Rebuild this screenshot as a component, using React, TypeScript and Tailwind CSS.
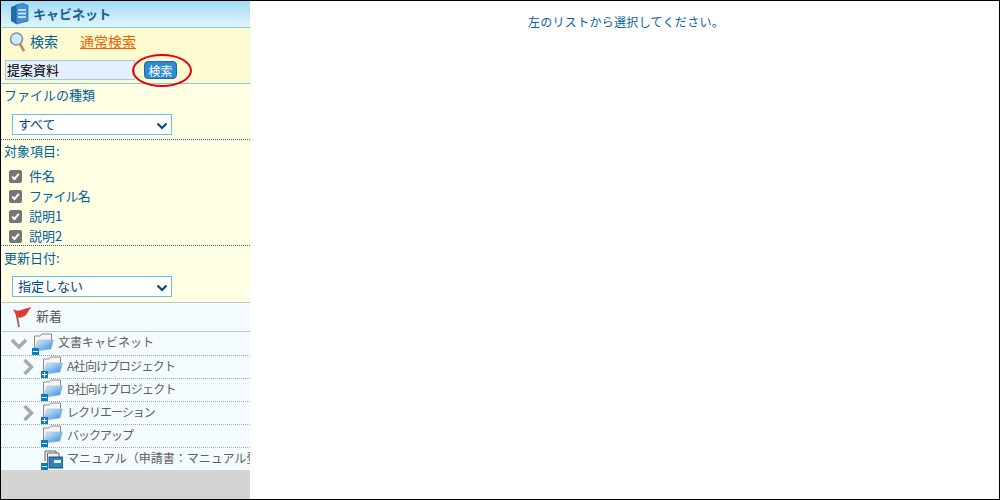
import React from 'react';

const FONT = { fontFamily: '"Noto Sans CJK JP", "Liberation Sans", sans-serif' };

const Arrow = () => (
  <svg width="12" height="8" viewBox="0 0 12 8" className="absolute right-[3px] top-[7px]">
    <path d="M1.5 1.5 L6 6 L10.5 1.5" fill="none" stroke="#004a80" strokeWidth="2.2" />
  </svg>
);

const FakeSelect = ({ label }: { label: string }) => (
  <div className="relative w-[160px] h-[21px] ml-[11px] bg-white border border-[#66c0f0] pl-[5px] text-[13px] leading-[18px] text-[#004a80]">
    {label}
    <Arrow />
  </div>
);

const Check = ({ label, tight }: { label: string; tight?: boolean }) => (
  <div className="flex items-center h-5 pl-[8px]">
    <span className="flex items-center justify-center w-[13px] h-[13px] rounded-[2px] bg-[#767676]">
      <svg width="9" height="9" viewBox="0 0 9 9">
        <path d="M1.2 4.6 L3.5 7 L7.8 1.8" fill="none" stroke="#fff" strokeWidth="2" />
      </svg>
    </span>
    <span className={tight ? 'ml-[7px] text-[13px] leading-5 text-[#00609c] tracking-[-0.8px]' : 'ml-[7px] text-[13px] leading-5 text-[#00609c]'}>
      {label}
    </span>
  </div>
);

const Badge = ({ open }: { open: boolean }) => (
  <span className="absolute left-0 bottom-0 w-[7px] h-[7px] bg-[#0a7cc4] flex items-center justify-center">
    <svg width="7" height="7" viewBox="0 0 7 7">
      <path d={open ? 'M1 3.5H6' : 'M1 3.5H6M3.5 1V6'} stroke="#fff" strokeWidth="1" />
    </svg>
  </span>
);

const Folder = ({ open }: { open: boolean }) => (
  <span className="relative block w-[22px] h-[22px] shrink-0">
    <svg width="22" height="22" viewBox="0 0 22 22" className="absolute inset-0">
      <defs>
        <linearGradient id="fld" x1="0" y1="0" x2="1" y2="1">
          <stop offset="0" stopColor="#e4f4fe" />
          <stop offset="1" stopColor="#2585dc" />
        </linearGradient>
      </defs>
      <path d="M2.5 15 V3 H8 L10 1 H19.5 V7" fill="#f6f6f6" stroke="#8a8a8a" strokeWidth="1" />
      <path d="M2 18.5 L6 7 H21.5 L19 16 Z" fill="url(#fld)" stroke="#a8b8c4" strokeWidth="0.6" />
    </svg>
    <Badge open={open} />
  </span>
);

const LinkedCabinet = () => (
  <span className="relative block w-[22px] h-[22px] shrink-0">
    <svg width="22" height="22" viewBox="0 0 22 22" className="absolute inset-0">
      <path d="M4 13 V3 H15 V7" fill="#eee" stroke="#667" strokeWidth="1" />
      <path d="M6.5 15 V5 H18 V9" fill="#eee" stroke="#667" strokeWidth="1" />
      <rect x="8" y="9" width="14" height="11" fill="#2b86c0" stroke="#234" strokeWidth="0.8" />
      <rect x="13" y="12" width="7" height="3" fill="#e8f0f4" />
    </svg>
    <Badge open />
  </span>
);

const TreeRow = ({ label, children, arrow, track }: { label: string; children: React.ReactNode; arrow?: boolean; track: string }) => (
  <div className="flex items-center h-[23px] border-b border-dotted border-[#aaaaaa] overflow-hidden whitespace-nowrap">
    <span className="w-[20px] shrink-0 ml-[20px] flex items-center">
      {arrow && (
        <svg width="12" height="18" viewBox="0 0 12 18" className="ml-[1px]">
          <path d="M2.5 2 L9.5 9 L2.5 16" fill="none" stroke="#a8a8a8" strokeWidth="3.4" />
        </svg>
      )}
    </span>
    <span>{children}</span>
    <span className={`ml-[4px] -mt-[3px] text-[12px] text-[#606060] ${track}`}>{label}</span>
  </div>
);

export default function App() {
  return (
    <div className="flex w-[1000px] h-[500px] border border-black bg-white overflow-hidden" style={FONT}>
      <div className="relative flex flex-col w-[249px] shrink-0 bg-[#d4d4d4]">
        <div className="flex items-center h-[27px] bg-gradient-to-b from-[#9fdcf6] to-[#e2f4fc] border-b border-[#7cc8ee] pl-[9px]">
          <svg width="19" height="22" viewBox="0 0 19 22">
            <path d="M1 4 L6 2 V21 L1 18 Z" fill="#1f6fb0" />
            <path d="M6 2 L13 0.5 L18 2.5 V18 L6 21 Z" fill="#3f93d4" stroke="#1a5f98" strokeWidth="0.7" />
            <path d="M8 7 H16 M8 10.5 H16 M8 14 H16" stroke="#e8f4fc" strokeWidth="1.5" />
          </svg>
          <span className="ml-[4px] text-[13px] font-bold text-[#17618f]">キャビネット</span>
        </div>

        <div className="h-[56px] bg-[#fffbd0] border-b border-[#7cc8ee]">
          <div className="flex items-center h-[29px] pl-[8px] pb-[2px] text-[14px]">
            <svg width="17" height="20" viewBox="0 0 17 20">
              <circle cx="7.5" cy="7" r="6" fill="#d5e8fa" stroke="#7d94b5" strokeWidth="1.6" />
              <path d="M11 12 L15 19" stroke="#c58a4a" strokeWidth="2.6" />
            </svg>
            <span className="ml-[4px] text-[#00609c]">検索</span>
            <span className="ml-[22px] text-[#f06000] underline">通常検索</span>
          </div>
          <div className="flex items-center pl-[4px] mt-[3px]">
            <div className="w-[130px] h-[20px] bg-[#e6effc] border border-[#9ccbe8] pl-[1px] text-[13px] leading-[17px] text-black">
              提案資料
            </div>
            <button className="ml-[9px] w-[33px] h-[18px] rounded-[4px] bg-[#2f8bd0] border border-[#1f6aa8] text-white text-[12px] leading-[15px]">
              検索
            </button>
          </div>
        </div>

        <div className="bg-[#ffffe3] h-[218px]">
          <div className="h-[56px] border-b border-dotted border-[#336688]">
            <div className="pl-[3px] h-[30px] text-[13px] leading-[22px] text-[#00609c]">ファイルの種類</div>
            <FakeSelect label="すべて" />
          </div>
          <div className="h-[106px] border-b border-dotted border-[#336688]">
            <div className="pl-[3px] h-[26px] text-[13px] leading-[22px] text-[#00609c]">対象項目:</div>
            <Check label="件名" />
            <Check label="ファイル名" tight />
            <Check label="説明1" />
            <Check label="説明2" />
          </div>
          <div className="pl-[3px] h-[30px] pt-[1px] text-[13px] leading-[22px] text-[#00609c]">更新日付:</div>
          <FakeSelect label="指定しない" />
        </div>

        <div className="flex items-center h-[30px] bg-[#f4fbff] border-y border-[#c0c4c4] pl-[11px]">
          <svg width="20" height="22" viewBox="0 0 20 22">
            <path d="M4 5 L7 21" stroke="#8a6a5a" strokeWidth="1.8" />
            <path d="M1 3 Q5 6 9 4 L19 1 L14 9 Q9 13 5 11 Z" fill="#e23a2e" />
          </svg>
          <span className="ml-[4px] -mt-[3px] text-[13px] text-[#555555]">新着</span>
        </div>

        <div className="bg-[#f4fbff]">
          <div className="flex items-center h-[24px] border-b border-dotted border-[#aaaaaa] whitespace-nowrap">
            <svg width="18" height="12" viewBox="0 0 18 12" className="ml-[9px]">
              <path d="M2 2 L9 9 L16 2" fill="none" stroke="#a8a8a8" strokeWidth="3.4" />
            </svg>
            <span className="ml-[4px]"><Folder open /></span>
            <span className="ml-[4px] -mt-[3px] text-[12px] text-[#606060]">文書キャビネット</span>
          </div>
          <TreeRow label="A社向けプロジェクト" arrow track="tracking-[-0.7px]"><Folder open={false} /></TreeRow>
          <TreeRow label="B社向けプロジェクト" track="tracking-[-0.7px]"><Folder open /></TreeRow>
          <TreeRow label="レクリエーション" arrow track="tracking-[-1px]"><Folder open={false} /></TreeRow>
          <TreeRow label="バックアップ" track="tracking-[-1px]"><Folder open /></TreeRow>
          <div className="flex items-center h-[22px] pl-[40px] overflow-hidden whitespace-nowrap">
            <LinkedCabinet />
            <span className="ml-[4px] -mt-[3px] text-[12px] text-[#606060]">{'マニュアル\uFF08申請書\uFF1Aマニュアル登録\uFF09'}</span>
          </div>
        </div>

        <div className="absolute left-[131px] top-[53px] w-[60px] h-[33px] rounded-[50%] border-2 border-[#e8000c]" />
      </div>

      <div className="flex-1 text-center pt-[11px] pl-[3px] text-[12px] tracking-[0.3px] leading-[20px] text-[#0a5fa8]">
        左のリストから選択してください。
      </div>
    </div>
  );
}
